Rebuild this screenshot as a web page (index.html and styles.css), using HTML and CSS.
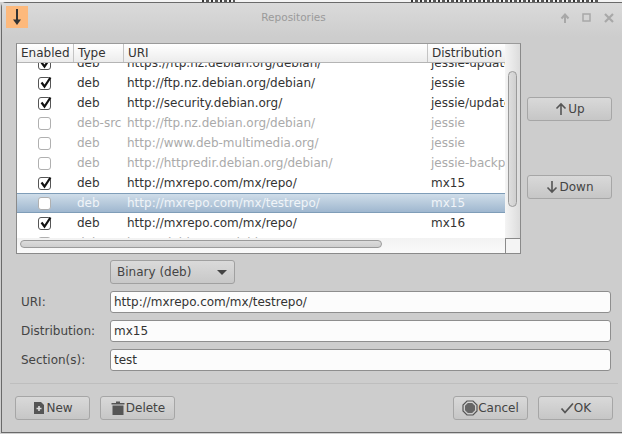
FILE: index.html
```html
<!DOCTYPE html>
<html>
<head>
  <meta charset="utf-8">
  <title>Repositories</title>
  <link rel="stylesheet" href="styles.css">
</head>
<body>
  <svg class="defs" width="0" height="0">
    <symbol id="tick" viewBox="0 0 13 13"><path d="M2.5 6.5 L5.5 10.5 L11.5 1.5" fill="none" stroke="#111" stroke-width="2.2"/></symbol>
  </svg>
  <div class="behind"><span class="behind-a"></span><span class="behind-b"></span></div>
  <div class="window">
    <div class="titlebar">
      <div class="app-icon">
        <svg width="22" height="22" viewBox="0 0 22 22"><path d="M11 3 V16" stroke="#333" stroke-width="2" fill="none"/><path d="M7 13.5 H15 L11 19 Z" fill="#333"/></svg>
      </div>
      <div class="title">Repositories</div>
      <div class="win-buttons">
        <svg width="12" height="12" viewBox="0 0 12 12"><path d="M6 11 V3 M2.5 6.5 L6 2.5 L9.5 6.5" fill="none" stroke="#a8a8a8" stroke-width="2"/></svg>
        <svg width="10" height="10" viewBox="0 0 10 10"><rect x="1" y="1" width="7" height="7" fill="none" stroke="#a8a8a8" stroke-width="1.5"/></svg>
        <svg width="12" height="12" viewBox="0 0 12 12"><path d="M2 2 L10 10 M10 2 L2 10" fill="none" stroke="#a8a8a8" stroke-width="2.2"/></svg>
      </div>
    </div>

    <div class="content">
      <div class="top-row">
        <div class="list">
          <div class="list-main">
            <div class="list-view">
              <div class="row head">
                <div class="col-check">Enabled</div><div>Type</div><div>URI</div><div>Distribution</div>
              </div>
              <div class="rows">
                <div class="row item first">
                  <div class="col-check"><span class="check on"><svg width="13" height="13"><use href="#tick"/></svg></span></div><div>deb</div><div>https://ftp.nz.debian.org/debian/</div><div>jessie-updates</div>
                </div>
                <div class="row item">
                  <div class="col-check"><span class="check on"><svg width="13" height="13"><use href="#tick"/></svg></span></div><div>deb</div><div>http://ftp.nz.debian.org/debian/</div><div>jessie</div>
                </div>
                <div class="row item">
                  <div class="col-check"><span class="check on"><svg width="13" height="13"><use href="#tick"/></svg></span></div><div>deb</div><div>http://security.debian.org/</div><div>jessie/updates</div>
                </div>
                <div class="row item off">
                  <div class="col-check"><span class="check"></span></div><div>deb-src</div><div>http://ftp.nz.debian.org/debian/</div><div>jessie</div>
                </div>
                <div class="row item off">
                  <div class="col-check"><span class="check"></span></div><div>deb</div><div>http://www.deb-multimedia.org/</div><div>jessie</div>
                </div>
                <div class="row item off">
                  <div class="col-check"><span class="check"></span></div><div>deb</div><div>http://httpredir.debian.org/debian/</div><div>jessie-backports</div>
                </div>
                <div class="row item">
                  <div class="col-check"><span class="check on"><svg width="13" height="13"><use href="#tick"/></svg></span></div><div>deb</div><div>http://mxrepo.com/mx/repo/</div><div>mx15</div>
                </div>
                <div class="row item selected">
                  <div class="col-check"><span class="check"></span></div><div>deb</div><div>http://mxrepo.com/mx/testrepo/</div><div>mx15</div>
                </div>
                <div class="row item">
                  <div class="col-check"><span class="check on"><svg width="13" height="13"><use href="#tick"/></svg></span></div><div>deb</div><div>http://mxrepo.com/mx/repo/</div><div>mx16</div>
                </div>
                <div class="row item off">
                  <div class="col-check"><span class="check"></span></div><div>deb</div><div>http://debian.org/debian/</div><div>mx16</div>
                </div>
              </div>
            </div>
            <div class="vscroll"><div class="vthumb"></div></div>
          </div>
          <div class="list-bottom">
            <div class="hscroll"><div class="hthumb"></div></div>
            <div class="corner"></div>
          </div>
        </div>

        <div class="side">
          <button class="btn side-btn up">
            <svg width="14" height="14" viewBox="0 0 14 14"><path d="M7 13 V2 M2.5 6.5 L7 2 L11.5 6.5" fill="none" stroke="#555" stroke-width="1.6"/></svg>Up
          </button>
          <button class="btn side-btn">
            <svg width="14" height="14" viewBox="0 0 14 14"><path d="M7 1 V12 M2.5 7.5 L7 12 L11.5 7.5" fill="none" stroke="#555" stroke-width="1.6"/></svg>Down
          </button>
        </div>
      </div>

      <div class="combo-row">
        <div class="combo">Binary (deb)<span class="caret"></span></div>
      </div>

      <div class="form">
        <label>URI:</label><div class="input">http://mxrepo.com/mx/testrepo/</div>
        <label>Distribution:</label><div class="input">mx15</div>
        <label>Section(s):</label><div class="input">test</div>
      </div>

      <div class="footer">
        <div class="footer-group">
          <button class="btn">
            <svg width="14" height="14" viewBox="0 0 14 14"><path d="M2 1 H9 L12 4 V13 H2 Z" fill="#555"/><path d="M7 5 V10 M4.5 7.5 H9.5" stroke="#ddd" stroke-width="1.6"/></svg>New
          </button>
          <button class="btn">
            <svg width="16" height="16" viewBox="0 0 16 16"><path d="M1.5 3 H14.5 V4.5 H1.5 Z M6 1.5 H10 V3 H6 Z M2.5 5.5 H13.5 V15 H2.5 Z" fill="#555"/></svg>Delete
          </button>
        </div>
        <div class="footer-group">
          <button class="btn">
            <svg width="16" height="16" viewBox="0 0 16 16"><path d="M5 1 H11 L15 5 V11 L11 15 H5 L1 11 V5 Z" fill="none" stroke="#555" stroke-width="1.2"/><path d="M5.8 3 H10.2 L13 5.8 V10.2 L10.2 13 H5.8 L3 10.2 V5.8 Z" fill="#666"/></svg>Cancel
          </button>
          <button class="btn">
            <svg width="14" height="14" viewBox="0 0 14 14"><path d="M1.5 7.5 L5 11.5 L13 2.5" fill="none" stroke="#555" stroke-width="1.8"/></svg>OK
          </button>
        </div>
      </div>
    </div>
  </div>
</body>
</html>
```

FILE: styles.css
```css
html, body {
  margin: 0;
  padding: 0;
}
body {
  width: 622px;
  height: 434px;
  overflow: hidden;
  background: #cfcfcf;
  font-family: "DejaVu Sans", sans-serif;
  font-size: 12px;
  color: #333333;
}
.defs {
  display: block;
  height: 0;
}
/* sliver of the window behind this one */
.behind {
  height: 2px;
  overflow: hidden;
  display: flex;
  background: #f4f4f4;
}
.behind-a,
.behind-b {
  display: block;
  background: repeating-linear-gradient(90deg, #333333 0 2px, #f4f4f4 2px 4px, #555555 4px 7px, #f4f4f4 7px 9px);
}
.behind-a {
  margin-left: 202px;
  width: 33px;
}
.behind-b {
  margin-left: 176px;
  width: 189px;
}
.window {
  margin-left: 1px;
  height: 431px;
  box-sizing: border-box;
  border: 1px solid #6a6a6a;
  border-right: none;
  border-top-left-radius: 5px;
  background: #cdcdcd;
  display: flex;
  flex-direction: column;
}
.titlebar {
  height: 34px;
  flex: none;
  display: flex;
  align-items: flex-start;
  background: linear-gradient(#dadada, #cdcdcd);
}
.app-icon {
  width: 22px;
  height: 22px;
  margin: 3px 0 0 4px;
  background: #fdb97c;
}
.title {
  flex: 1;
  text-align: center;
  line-height: 29px;
  font-size: 10.5px;
  color: #9a9a9a;
}
.win-buttons {
  display: flex;
  align-items: center;
  justify-content: flex-end;
  gap: 11px;
  width: 63px;
  margin-top: 9px;
  padding-right: 7px;
  box-sizing: border-box;
}

.content {
  flex: 1;
  padding: 6px 9px 12px 14px;
  display: flex;
  flex-direction: column;
}
.top-row {
  display: flex;
}

/* list with scrollbars */
.list {
  width: 505px;
  height: 211px;
  box-sizing: border-box;
  border: 1px solid #8a8a8a;
  border-top-color: #9a9a9a;
  background: #ffffff;
  display: flex;
  flex-direction: column;
}
.list-main {
  display: flex;
  height: 194px;
}
.list-view {
  width: 488px;
  overflow: hidden;
}
.row {
  display: grid;
  grid-template-columns: 56px 50px 304px 78px;
  white-space: nowrap;
}
.row > div {
  overflow: hidden;
}
.head {
  height: 19px;
  line-height: 19px;
  box-sizing: border-box;
  background: linear-gradient(#ffffff, #ececec);
  border-bottom: 1px solid #b4b4b4;
  position: relative;
  z-index: 1;
}
.head > div {
  border-left: 1px solid #c4c4c4;
  padding-left: 4px;
}
.head > div:first-child {
  border-left: none;
}
.rows {
  height: 175px;
  overflow: hidden;
}
.item {
  height: 20px;
  line-height: 20px;
  box-sizing: border-box;
}
.item > div {
  padding-left: 4px;
  overflow: visible;
}
.item.first {
  margin-top: -10px;
}
.item.off {
  color: #aaaaaa;
}
.item.selected {
  background: linear-gradient(#cfdde9, #9fb7cf);
  border-top: 1px solid #7f9db8;
  border-bottom: 1px solid #7f9db8;
  color: #f0f4f8;
  line-height: 18px;
}
.item .col-check {
  display: flex;
  align-items: center;
  padding-left: 21px;
}
.check {
  width: 11px;
  height: 11px;
  display: block;
  border: 1px solid #b0b0b0;
  border-radius: 3px;
  background: #ffffff;
  position: relative;
}
.check.on {
  border-color: #555555;
}
.check svg {
  position: absolute;
  left: 0;
  top: -2px;
}
.vscroll {
  width: 15px;
  background: linear-gradient(90deg, #f4f4f4, #dcdcdc);
  padding: 8px 3px 0 3px;
  box-sizing: border-box;
}
.vthumb {
  height: 136px;
  box-sizing: border-box;
  border: 1px solid #9a9a9a;
  border-radius: 5px;
  background: linear-gradient(90deg, #dedede, #cfcfcf);
  margin-top: 19px;
}
.list-bottom {
  flex: 1;
  display: flex;
}
.hscroll {
  width: 488px;
  background: linear-gradient(#f2f2f2, #fafafa);
  padding: 2px 0 0 3px;
  box-sizing: border-box;
}
.hthumb {
  width: 362px;
  height: 8px;
  box-sizing: border-box;
  border: 1px solid #9a9a9a;
  border-radius: 4px;
  background: linear-gradient(#dcdcdc, #cecece);
}
.corner {
  flex: 1;
  background: #f4f4f4;
  border: 1px solid #8a8a8a;
  border-width: 1px 0 0 1px;
}

/* buttons */
.btn {
  font: inherit;
  color: #444444;
  height: 24px;
  box-sizing: border-box;
  border: 1px solid #a6a6a6;
  border-radius: 3px;
  background: linear-gradient(#d9d9d9, #c6c6c6);
  display: flex;
  align-items: center;
  justify-content: center;
  padding: 0;
  width: 75px;
}
.side {
  margin-left: 6px;
  display: flex;
  flex-direction: column;
  gap: 54px;
  padding-top: 54px;
}
.side-btn {
  width: 85px;
}

.combo-row {
  margin-top: 6px;
  padding-left: 94px;
}
.combo {
  width: 125px;
  height: 24px;
  box-sizing: border-box;
  border: 1px solid #a0a0a0;
  border-radius: 3px;
  background: linear-gradient(#dadada, #c8c8c8);
  color: #444444;
  line-height: 22px;
  padding-left: 6px;
  position: relative;
}
.caret {
  position: absolute;
  right: 7px;
  top: 9px;
  border-left: 5px solid transparent;
  border-right: 5px solid transparent;
  border-top: 5px solid #444444;
}

.form {
  margin-top: 7px;
  display: grid;
  grid-template-columns: 94px 501px;
  row-gap: 7px;
}
.form label {
  padding-left: 5px;
  line-height: 22px;
  color: #444444;
}
.input {
  height: 22px;
  box-sizing: border-box;
  border: 1px solid #8e8e8e;
  border-radius: 3px;
  background: #fcfcfc;
  color: #333333;
  line-height: 20px;
  padding-left: 3px;
}

.footer {
  margin: 12px -5px 0 -6px;
  padding: 12px 5px 0 5px;
  border-top: 1px solid #bebebe;
  display: flex;
  justify-content: space-between;
}
.footer-group {
  display: flex;
  gap: 10px;
}
```
